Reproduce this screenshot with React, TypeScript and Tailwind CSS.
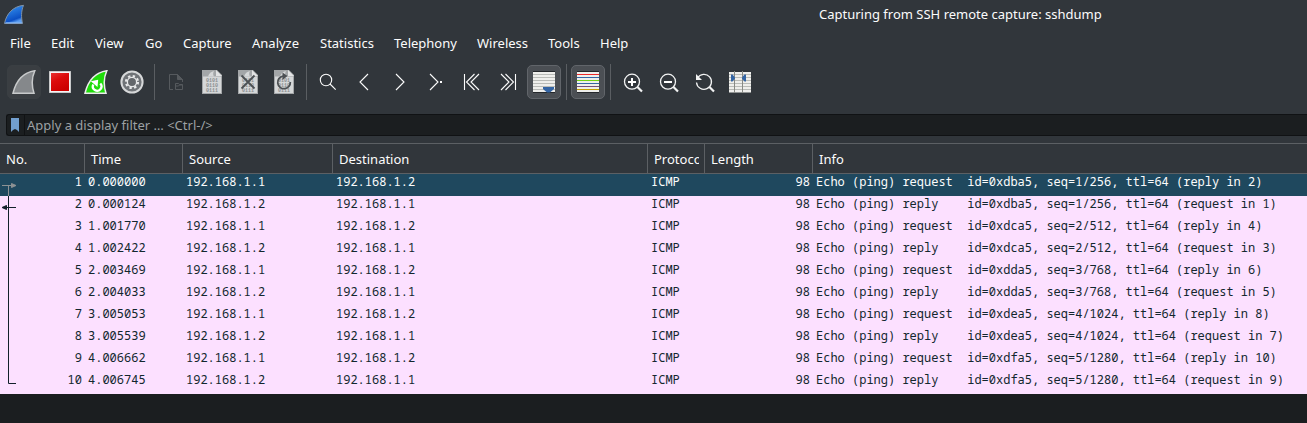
import type { ReactNode } from "react";

type Packet = {
  no: number;
  time: string;
  source: string;
  destination: string;
  protocol: string;
  length: number;
  info: string;
};

const A = "192.168.1.1";
const B = "192.168.1.2";

const packets: Packet[] = [
  { no: 1, time: "0.000000", source: A, destination: B, protocol: "ICMP", length: 98, info: "Echo (ping) request  id=0xdba5, seq=1/256, ttl=64 (reply in 2)" },
  { no: 2, time: "0.000124", source: B, destination: A, protocol: "ICMP", length: 98, info: "Echo (ping) reply    id=0xdba5, seq=1/256, ttl=64 (request in 1)" },
  { no: 3, time: "1.001770", source: A, destination: B, protocol: "ICMP", length: 98, info: "Echo (ping) request  id=0xdca5, seq=2/512, ttl=64 (reply in 4)" },
  { no: 4, time: "1.002422", source: B, destination: A, protocol: "ICMP", length: 98, info: "Echo (ping) reply    id=0xdca5, seq=2/512, ttl=64 (request in 3)" },
  { no: 5, time: "2.003469", source: A, destination: B, protocol: "ICMP", length: 98, info: "Echo (ping) request  id=0xdda5, seq=3/768, ttl=64 (reply in 6)" },
  { no: 6, time: "2.004033", source: B, destination: A, protocol: "ICMP", length: 98, info: "Echo (ping) reply    id=0xdda5, seq=3/768, ttl=64 (request in 5)" },
  { no: 7, time: "3.005053", source: A, destination: B, protocol: "ICMP", length: 98, info: "Echo (ping) request  id=0xdea5, seq=4/1024, ttl=64 (reply in 8)" },
  { no: 8, time: "3.005539", source: B, destination: A, protocol: "ICMP", length: 98, info: "Echo (ping) reply    id=0xdea5, seq=4/1024, ttl=64 (request in 7)" },
  { no: 9, time: "4.006662", source: A, destination: B, protocol: "ICMP", length: 98, info: "Echo (ping) request  id=0xdfa5, seq=5/1280, ttl=64 (reply in 10)" },
  { no: 10, time: "4.006745", source: B, destination: A, protocol: "ICMP", length: 98, info: "Echo (ping) reply    id=0xdfa5, seq=5/1280, ttl=64 (request in 9)" },
];

const menus = ["File", "Edit", "View", "Go", "Capture", "Analyze", "Statistics", "Telephony", "Wireless", "Tools", "Help"];

const FIN = "M1 23.3C4 11 11 2.5 22.800 .8C19.500 8 19.500 15.500 22 23.300Z";

function Icon({ children }: { children: ReactNode }) {
  return (
    <svg width="24" height="24" viewBox="0 0 24 24" fill="none" aria-hidden="true">
      {children}
    </svg>
  );
}

function Thin({ children }: { children: ReactNode }) {
  return (
    <Icon>
      <g stroke="#fcfcfc" strokeWidth="1.1">{children}</g>
    </Icon>
  );
}

function AppLogo() {
  return (
    <svg width="22" height="22" viewBox="0 0 22 22" aria-hidden="true">
      <defs>
        <linearGradient id="logo" x1="0" y1="0" x2="0.4" y2="1">
          <stop offset="0" stopColor="#3b9bf5" />
          <stop offset="0.85" stopColor="#0b4fc4" />
          <stop offset="1" stopColor="#5b9df0" />
        </linearGradient>
      </defs>
      <path d="M1.500 19.500C3.500 9.500 10 2.500 20.500 1.300C18 7.500 18.200 13.500 19.500 19.500Z" fill="url(#logo)" stroke="#8092a6" strokeWidth="1" />
      <path d="M2.500 18.800H18.800" stroke="#7fb2f2" strokeWidth="1.200" />
    </svg>
  );
}

function StartIcon() {
  return (
    <Icon>
      <path d={FIN} fill="#85888b" stroke="#c8cacb" strokeWidth="1.500" />
    </Icon>
  );
}

function StopIcon() {
  return (
    <Icon>
      <defs>
        <linearGradient id="stop" x1="0" y1="0" x2="0.5" y2="1">
          <stop offset="0" stopColor="#e83030" />
          <stop offset="0.45" stopColor="#dc0b0b" />
          <stop offset="1" stopColor="#cc0000" />
        </linearGradient>
      </defs>
      <rect x="1" y="1" width="22" height="22" fill="#b5b7b8" />
      <rect x="1.700" y="1.700" width="20.600" height="20.600" fill="#f4f4f4" />
      <rect x="3" y="3" width="18" height="18" fill="url(#stop)" />
    </Icon>
  );
}

function RestartIcon() {
  return (
    <Icon>
      <path d={FIN} fill="#1fdc0a" stroke="#ececec" strokeWidth="1.500" />
      <path d="M9.300 14.500A4.300 4.300 0 1 0 16.300 13.500" stroke="#fff" strokeWidth="2.300" />
      <path d="M6.800 11.200L14.200 9.800L13.500 17Z" fill="#fff" />
    </Icon>
  );
}

function OptionsIcon() {
  return (
    <Icon>
      <circle cx="12" cy="12" r="10.600" fill="#6f7377" stroke="#d6d8d9" strokeWidth="2" />
      <g stroke="#e8e9ea">
        <circle cx="12" cy="12" r="6" strokeWidth="2.200" strokeDasharray="2.356 2.356" />
        <circle cx="12" cy="12" r="4.600" strokeWidth="1.300" fill="#63676b" />
      </g>
    </Icon>
  );
}

function OpenIcon() {
  return (
    <Icon>
      <g stroke="#565a5e" strokeWidth="1">
        <path d="M9 19.500H5.500V4.500H13.500L18.500 9.500V12" />
        <path d="M13.500 4.500V9.500H18.500Z" fill="#565a5e" />
        <path d="M11.500 19.500V13.500H14.500L15.500 14.500H18.500V19.500Z" />
        <path d="M12 16H14.500L15.500 15H18.500" />
      </g>
    </Icon>
  );
}

function CaptureFile({ children }: { children?: ReactNode }) {
  return (
    <Icon>
      <path d="M2 0H17L22 5V24H2Z" fill="#a3a6a8" />
      <path d="M3 6.500H21V23H3Z" fill="#d5d7d8" />
      <path d="M8 6.500C9 3.500 11 1.500 14 1C12.800 3 13 5 14 6.500Z" fill="#d5d7d8" />
      <path d="M16 0L22 6H16Z" fill="#e2e3e4" />
      <g fill="#8b8f92" fontFamily="Liberation Mono, monospace" fontSize="5" fontWeight="700">
        <text x="6" y="12">0101</text>
        <text x="6" y="17">0110</text>
        <text x="6" y="22">0111</text>
      </g>
      {children}
    </Icon>
  );
}

function Lens({ children }: { children?: ReactNode }) {
  return (
    <Icon>
      <circle cx="12" cy="11.700" r="7.500" stroke="#f2f3f3" strokeWidth="1.300" />
      <path d="M17.500 17L22 21.500" stroke="#f2f3f3" strokeWidth="2.200" />
      {children}
    </Icon>
  );
}

function AutoScrollIcon() {
  return (
    <Icon>
      <rect x="1" y="2" width="22" height="20.500" fill="#efefec" />
      <path d="M1 4.500H23M1 7.500H23M1 10.500H23M1 13.500H23M1 16.500H23M1 19.500H23" stroke="#babcb8" />
      <path d="M1 1.500H23M1 22.500H23" stroke="#25282b" />
      <path d="M11 17H22V19L18 22.500H15L11 19Z" fill="#3465a4" />
    </Icon>
  );
}

function ColorizeIcon() {
  return (
    <Icon>
      <rect x="1" y="2" width="22" height="20.500" fill="#efefec" />
      <path d="M1 1.500H23M1 22.500H23" stroke="#25282b" />
      <path d="M1 4.500H23" stroke="#ef2929" />
      <path d="M1 7.500H23" stroke="#3465a4" />
      <path d="M1 10.500H23" stroke="#73d216" />
      <path d="M1 13.500H23" stroke="#3465a4" />
      <path d="M1 16.500H23" stroke="#75507b" />
      <path d="M1 19.500H23" stroke="#c4a000" />
    </Icon>
  );
}

function ResizeColumnsIcon() {
  return (
    <Icon>
      <rect x="1" y="2" width="22" height="20.500" fill="#efefec" />
      <path d="M1 4.500H23M1 7.500H23M1 10.500H23M1 13.500H23M1 16.500H23M1 19.500H23" stroke="#babcb8" />
      <path d="M6.500 1V23M14.500 1V23" stroke="#888a85" />
      <path d="M3 4.500H4.500L7 7.500V8.500L4.500 11.500H3Z" fill="#3465a4" />
      <path d="M18 4.500H16.500L14 7.500V8.500L16.500 11.500H18Z" fill="#3465a4" />
    </Icon>
  );
}

function Tool({ label, children, tone = "plain" }: { label: string; children: ReactNode; tone?: "plain" | "faint" | "on" }) {
  const look =
    tone === "on"
      ? "border-[#61656a] bg-[#4b4f54]"
      : tone === "faint"
        ? "border-[#3a3f43] bg-[#3a3e42]"
        : "border-transparent";
  return (
    <button
      type="button"
      aria-label={label}
      title={label}
      className={`flex size-[34px] shrink-0 items-center justify-center rounded-[5px] border ${look}`}
    >
      {children}
    </button>
  );
}

function Divider() {
  return (
    <div className="flex w-[6px] shrink-0 justify-center">
      <div className="h-9 w-px bg-[#5a5e62]" />
    </div>
  );
}

function Relation({ no }: { no: number }) {
  return (
    <svg width="18" height="22" viewBox="0 0 18 22" fill="none" className="block shrink-0" aria-hidden="true">
      {no === 1 && (
        <g stroke="#8d9193">
          <path d="M2 11.500H12M8.500 11.500V22" />
          <path d="M11.500 9.500L16 11.500L11.500 13.500Z" fill="#8d9193" />
        </g>
      )}
      {no === 2 && (
        <g stroke="#12202a">
          <path d="M6 11.500H16M8.500 0V22" />
          <path d="M6.500 9.500L2 11.500L6.500 13.500Z" fill="#12202a" />
        </g>
      )}
      {no > 2 && no < 10 && <path d="M8.500 0V22" stroke="#12202a" />}
      {no === 10 && <path d="M8.500 0V11.500H16" stroke="#12202a" />}
    </svg>
  );
}

const headCell = "overflow-hidden border-r border-[#5c6064] pt-[2px] pr-[5px] pb-0 pl-[6px] text-left font-normal whitespace-nowrap";
const cell = "overflow-hidden p-0 pl-[3px] align-top whitespace-pre";

export default function App() {
  return (
    <div className="flex min-h-screen flex-col overflow-hidden bg-[#1b1e20] font-['Noto_Sans',sans-serif] text-[13px] text-[#fcfcfc]">
      <div className="bg-[#31363b]">
        <header className="flex h-7 items-center pt-[2px]">
          <div className="w-[819px] shrink-0 pl-[3px]">
            <AppLogo />
          </div>
          <h1 className="whitespace-nowrap">Capturing from SSH remote capture: sshdump</h1>
        </header>

        <nav className="grid h-[30px] grid-cols-[41px_44px_50px_38px_69px_68px_74px_83px_71px_52px_48px] items-center pt-[2px]">
          {menus.map((m) => (
            <button key={m} type="button" className="pl-[10px] text-left">
              {m}
            </button>
          ))}
        </nav>

        <div className="flex h-12 items-center gap-[2px] pl-[7px]">
          <Tool label="Start capture" tone="faint"><StartIcon /></Tool>
          <Tool label="Stop capture"><StopIcon /></Tool>
          <Tool label="Restart capture"><RestartIcon /></Tool>
          <Tool label="Capture options"><OptionsIcon /></Tool>
          <Divider />
          <Tool label="Open"><OpenIcon /></Tool>
          <Tool label="Save"><CaptureFile /></Tool>
          <Tool label="Close">
            <CaptureFile><path d="M5.500 5.500L18.500 18.500M18.500 5.500L5.500 18.500" stroke="#4c5054" strokeWidth="1.800" /></CaptureFile>
          </Tool>
          <Tool label="Reload">
            <CaptureFile>
              <path d="M11 6.200A6.300 6.300 0 1 0 18.300 12" stroke="#4c5054" strokeWidth="1.800" />
              <path d="M10.500 2.500L15.500 6L10.500 10Z" fill="#4c5054" />
            </CaptureFile>
          </Tool>
          <Divider />
          <Tool label="Find packet"><Thin><circle cx="10" cy="10" r="5.700" /><path d="M14 14L19.700 19.700" /></Thin></Tool>
          <Tool label="Previous packet"><Thin><path d="M16 4L8 12L16 20" /></Thin></Tool>
          <Tool label="Next packet"><Thin><path d="M8 4L16 12L8 20" /></Thin></Tool>
          <Tool label="Go to packet"><Thin><path d="M6 4L14 12L6 20" /><rect x="16" y="11" width="2" height="2" fill="#fcfcfc" stroke="none" /></Thin></Tool>
          <Tool label="First packet"><Thin><path d="M4.500 4V20M14.500 4L6.500 12L14.500 20M19 4L11 12L19 20" /></Thin></Tool>
          <Tool label="Last packet"><Thin><path d="M19.500 4V20M9.500 4L17.500 12L9.500 20M5 4L13 12L5 20" /></Thin></Tool>
          <Tool label="Auto scroll" tone="on"><AutoScrollIcon /></Tool>
          <Divider />
          <Tool label="Colorize" tone="on"><ColorizeIcon /></Tool>
          <Divider />
          <Tool label="Zoom in"><Lens><path d="M8 12H16M12 8V16" stroke="#fff" strokeWidth="2" /></Lens></Tool>
          <Tool label="Zoom out"><Lens><path d="M8 12H16" stroke="#fff" strokeWidth="2" /></Lens></Tool>
          <Tool label="Normal size">
            <Icon>
              <path d="M5.500 8A7.500 7.500 0 1 1 4.500 12.500" stroke="#f2f3f3" strokeWidth="1.300" />
              <path d="M17.500 17L22 21.500" stroke="#f2f3f3" strokeWidth="2.200" />
              <path d="M4 4V10H10Z" fill="#f2f3f3" />
            </Icon>
          </Tool>
          <Tool label="Resize columns"><ResizeColumnsIcon /></Tool>
        </div>

        <div className="pt-2 pb-[7px] pl-[6px]">
          <div className="flex h-[22px] items-stretch rounded-l-[3px] border border-r-0 border-[#101214] bg-[#1b1e20]">
            <button type="button" aria-label="Filter bookmarks" className="flex w-[18px] shrink-0 items-center border-r border-[#101214] pl-1">
              <svg width="8" height="14" viewBox="0 0 8 14" aria-hidden="true">
                <path d="M0 0H8V14L6 12L4 11L2 12L0 14Z" fill="#729fcf" />
              </svg>
            </button>
            <input
              type="text"
              aria-label="Display filter"
              placeholder="Apply a display filter … <Ctrl-/>"
              className="min-w-0 flex-1 bg-transparent pt-[2px] pl-[2px] outline-none placeholder:text-[#9da1a4]"
            />
          </div>
        </div>
      </div>

      <table className="w-full table-fixed border-separate border-spacing-0">
        <colgroup>
          <col className="w-[85px]" />
          <col className="w-[98px]" />
          <col className="w-[150px]" />
          <col className="w-[315px]" />
          <col className="w-[57px]" />
          <col className="w-[108px]" />
          <col />
        </colgroup>
        <thead className="bg-[#31363b]">
          <tr className="h-[31px] [&>th]:border-y">
            <th className={headCell}>No.</th>
            <th className={headCell}>Time</th>
            <th className={headCell}>Source</th>
            <th className={headCell}>Destination</th>
            <th className={headCell}><div className="overflow-hidden">Protocol</div></th>
            <th className={headCell}>Length</th>
            <th className={`${headCell} border-r-0`}>Info</th>
          </tr>
        </thead>
        <tbody className="font-['Noto_Sans_Mono','DejaVu_Sans_Mono',monospace] text-[12px] leading-4">
          {packets.map((p) => (
            <tr key={p.no} className={p.no === 1 ? "h-[22px] bg-[#1f485e] text-[#fcfcfc]" : "h-[22px] bg-[#fce0ff] text-[#12272e]"}>
              <td className="p-0 align-top">
                <div className="flex justify-between pr-[3px]">
                  <Relation no={p.no} />
                  <span>{p.no}</span>
                </div>
              </td>
              <td className={cell}>{p.time}</td>
              <td className={cell}>{p.source}</td>
              <td className={cell}>{p.destination}</td>
              <td className={cell}>{p.protocol}</td>
              <td className={`${cell} pr-[3px] text-right`}>{p.length}</td>
              <td className={cell}>{p.info}</td>
            </tr>
          ))}
        </tbody>
      </table>
    </div>
  );
}
